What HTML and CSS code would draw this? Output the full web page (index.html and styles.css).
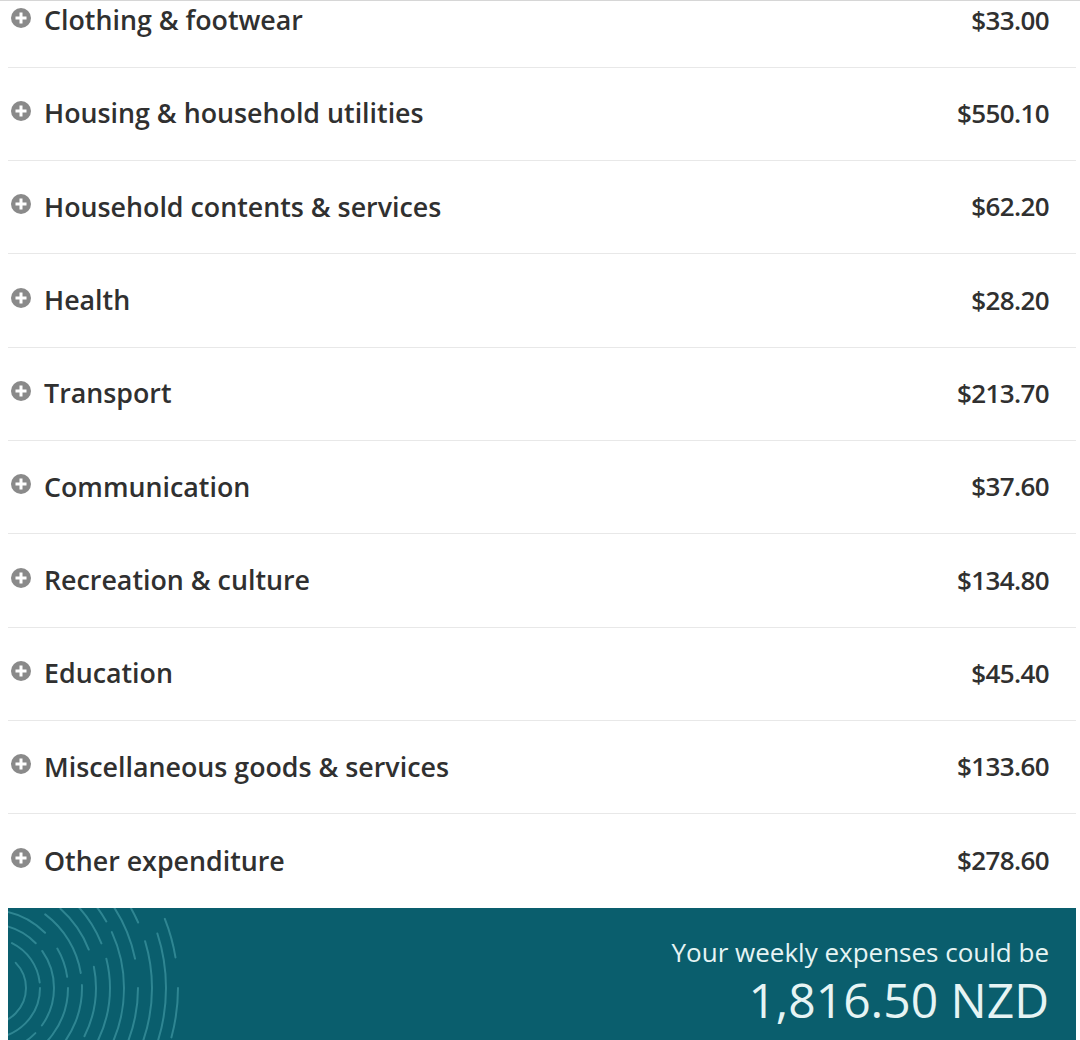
FILE: index.html
```html
<!DOCTYPE html>
<html>
<head>
<meta charset="utf-8">
<link rel="stylesheet" href="styles.css">
</head>
<body>
<div class="topline"></div>
<div class="panel">
  <ul class="list">
    <li class="row"><span class="label"><span class="plus"></span>Clothing &amp; footwear</span><span class="amt">$33.00</span></li>
    <li class="row"><span class="label"><span class="plus"></span>Housing &amp; household utilities</span><span class="amt">$550.10</span></li>
    <li class="row"><span class="label"><span class="plus"></span>Household contents &amp; services</span><span class="amt">$62.20</span></li>
    <li class="row"><span class="label"><span class="plus"></span>Health</span><span class="amt">$28.20</span></li>
    <li class="row"><span class="label"><span class="plus"></span>Transport</span><span class="amt">$213.70</span></li>
    <li class="row"><span class="label"><span class="plus"></span>Communication</span><span class="amt">$37.60</span></li>
    <li class="row"><span class="label"><span class="plus"></span>Recreation &amp; culture</span><span class="amt">$134.80</span></li>
    <li class="row"><span class="label"><span class="plus"></span>Education</span><span class="amt">$45.40</span></li>
    <li class="row"><span class="label"><span class="plus"></span>Miscellaneous goods &amp; services</span><span class="amt">$133.60</span></li>
    <li class="row last"><span class="label"><span class="plus"></span>Other expenditure</span><span class="amt">$278.60</span></li>
  </ul>
  <div class="total">
    <svg class="rings" width="200" height="140" viewBox="0 0 200 140" aria-hidden="true">
      <g fill="none" stroke="#3f97a3" stroke-width="2" stroke-linecap="round" opacity="0.7">
        <circle cx="-18" cy="80" r="36" stroke-dasharray="60 14 40 10"/>
        <circle cx="-18" cy="80" r="50" stroke-dasharray="80 18 50 12"/>
        <circle cx="-18" cy="80" r="64" stroke-dasharray="40 10 90 16"/>
        <circle cx="-18" cy="80" r="78" stroke-dasharray="100 20 30 14"/>
        <circle cx="-18" cy="80" r="92" stroke-dasharray="70 12 60 22"/>
        <circle cx="-18" cy="80" r="106" stroke-dasharray="50 18 110 14"/>
        <circle cx="-18" cy="80" r="120" stroke-dasharray="120 16 40 20"/>
        <circle cx="-18" cy="80" r="134" stroke-dasharray="90 24 70 12"/>
        <circle cx="-18" cy="80" r="148" stroke-dasharray="60 30 100 20"/>
        <circle cx="-18" cy="80" r="162" stroke-dasharray="110 20 50 30"/>
        <circle cx="-18" cy="80" r="176" stroke-dasharray="80 40 60 30"/>
        <circle cx="-18" cy="80" r="188" stroke-dasharray="50 60 40 50"/>
      </g>
    </svg>
    <div class="total-text">
      <div class="total-caption">Your weekly expenses could be</div>
      <div class="total-value">1,816.50 NZD</div>
    </div>
  </div>
</div>
</body>
</html>
```

FILE: styles.css
```css
html, body {
  margin: 0;
  padding: 0;
  background: #ffffff;
  overflow: hidden;
}
body {
  width: 1080px;
  height: 1040px;
  font-family: "Open Sans", "Noto Sans", sans-serif;
  color: #303030;
  position: relative;
}
.topline {
  position: absolute;
  top: 0;
  left: 0;
  right: 0;
  height: 1px;
  background: #d6d6d6;
  z-index: 2;
}
.panel {
  width: 1068px;
  margin-left: 8px;
  margin-top: -25.5px;
}
.list {
  list-style: none;
  margin: 0;
  padding: 0;
}
.row {
  height: 93.33px;
  box-sizing: border-box;
  border-bottom: 1px solid #e8e8e8;
  display: flex;
  align-items: center;
  justify-content: space-between;
  padding: 0 27px 2px 3px;
}
.row.last {
  border-bottom: none;
}
.label {
  display: flex;
  align-items: center;
  font-size: 26.8px;
  font-weight: 600;
  color: #303030;
}
.plus {
  width: 20px;
  height: 20px;
  border-radius: 50%;
  background: #8a8a8a;
  margin-right: 13px;
  position: relative;
  flex: none;
  margin-top: -4px;
}
.plus::before,
.plus::after {
  content: "";
  position: absolute;
  background: #ffffff;
  left: 50%;
  top: 50%;
  transform: translate(-50%, -50%);
}
.plus::before {
  width: 11px;
  height: 3px;
}
.plus::after {
  width: 3px;
  height: 11px;
}
.amt {
  font-size: 26px;
  font-weight: 600;
  letter-spacing: -0.6px;
  color: #303030;
}
.total {
  position: relative;
  height: 140px;
  background: #0a5e6d;
  overflow: hidden;
  display: flex;
  justify-content: flex-end;
  padding: 0 27px 0 0;
}
.rings {
  position: absolute;
  left: 0;
  top: 0;
}
.total-text {
  position: relative;
  text-align: right;
  color: #e6f4f4;
  padding-top: 27px;
}
.total-caption {
  font-size: 26px;
  font-weight: 400;
  line-height: 34px;
}
.total-value {
  font-size: 48px;
  font-weight: 400;
  line-height: 62px;
}
```
